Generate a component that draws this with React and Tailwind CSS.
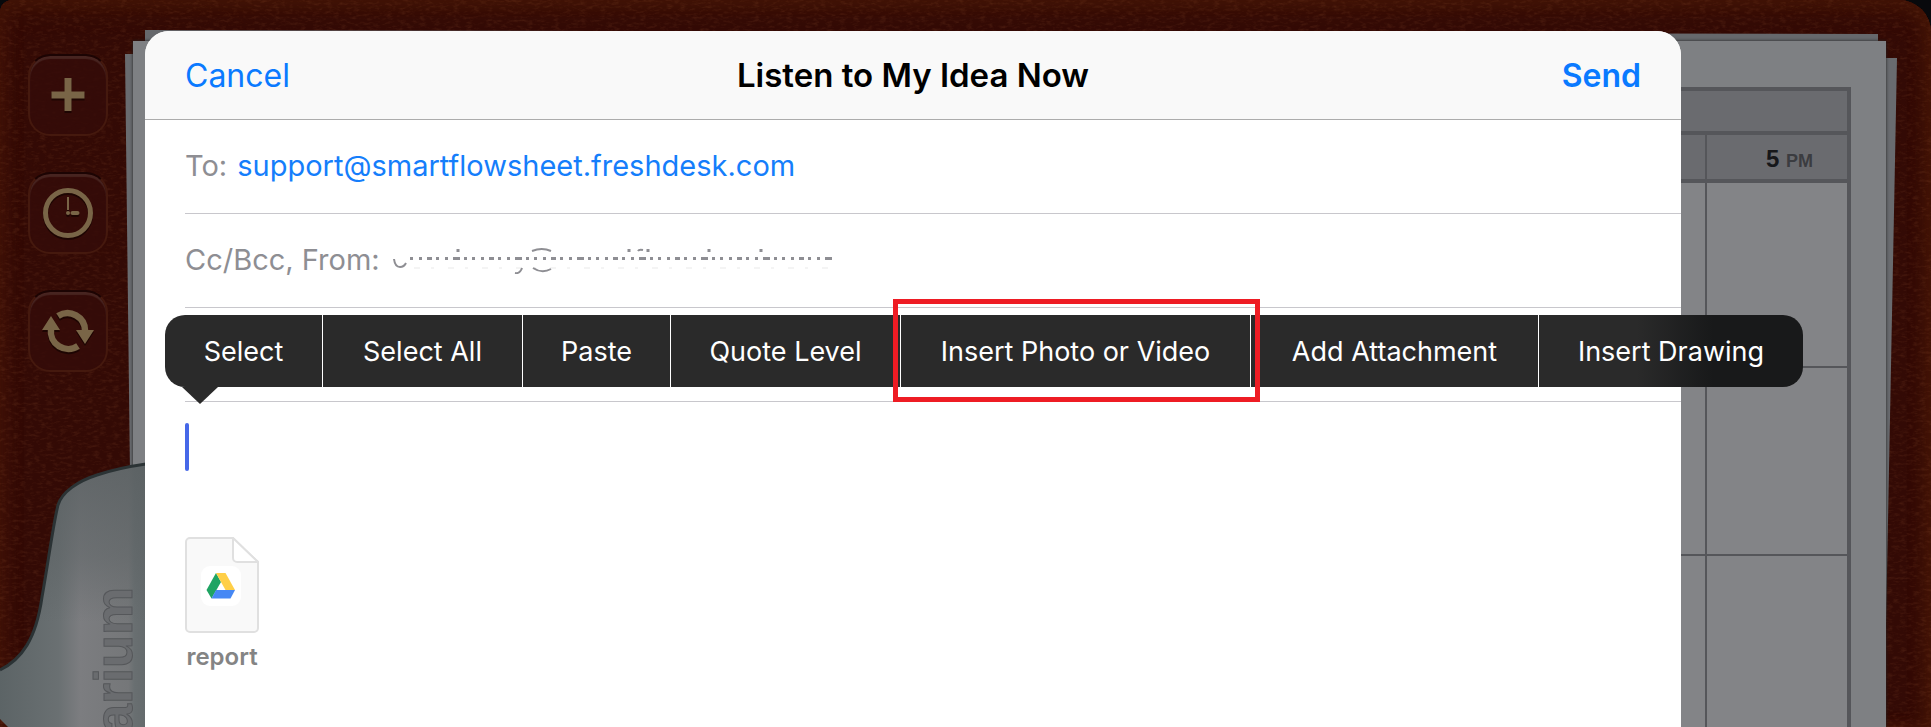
import React from 'react';

const MENU_ITEMS = ['Select', 'Select All', 'Paste', 'Quote Level', 'Insert Photo or Video', 'Add Attachment', 'Insert Drawing'];

const PlusIcon = () => (
    <svg width="50" height="50" viewBox="0 0 50 50" fill="#796547" className="drop-shadow-[0_2px_0_#1d0502]">
        <path d="M21.5 8h7v13.500h13v7h-13V41h-7V28.500h-13v-7h13z" />
    </svg>
);

const ClockIcon = () => (
    <svg width="50" height="50" viewBox="0 0 50 50" fill="none" stroke="#796547" className="drop-shadow-[0_2px_0_#1d0502]">
        <circle cx="25" cy="25" r="22.5" strokeWidth="5" />
        <path d="M25 9v13" strokeWidth="2" />
        <path d="M29.5 25h5" strokeWidth="4" strokeLinecap="round" />
        <circle cx="25" cy="25" r="2" fill="#796547" stroke="none" />
    </svg>
);

const SyncIcon = () => (
    <svg width="52" height="44" viewBox="0 0 52 44" className="drop-shadow-[0_2px_0_#1d0502]">
        <g fill="none" stroke="#796547" strokeWidth="6.5">
            <path d="M16 7A17.500 17.500 0 0 1 43 22" />
            <path d="M36 37A17.500 17.500 0 0 1 9 20" />
        </g>
        <path d="M0 21 9 7l9 14zM34 21h18l-9 14z" fill="#796547" />
    </svg>
);

const SIDE_BUTTONS = [
    { label: 'Add', Icon: PlusIcon },
    { label: 'Schedule', Icon: ClockIcon },
    { label: 'Sync', Icon: SyncIcon },
];

const Sidebar = () => (
    <nav className="flex w-[145px] flex-col gap-9 pl-7 pt-[54px]">
        {SIDE_BUTTONS.map(({ label, Icon }) => (
            <button
                key={label}
                aria-label={label}
                className="flex h-[82px] w-20 items-center justify-center rounded-[22px] border-2 border-[#45190e] border-t-[#1c0403] bg-[#340b09]/80 shadow-[inset_0_3px_1px_#472420]"
            >
                <Icon />
            </button>
        ))}
    </nav>
);

const Leather = () => (
    <svg className="absolute inset-0 h-full w-full opacity-15" aria-hidden="true">
        <filter id="leather">
            <feTurbulence type="fractalNoise" baseFrequency="0.15 0.35" numOctaves="3" seed="4" />
            <feColorMatrix values="0 0 0 0 0.42  0 0 0 0 0.14  0 0 0 0 0.05  2.4 0 0 0 -1.1" />
        </filter>
        <rect width="100%" height="100%" filter="url(#leather)" />
    </svg>
);

const CLIP_EDGE = 'M146 5C125 8 112 11 97 16C78 22 62 33 58 46C53 66 48 105 42 138C36 180 22 200 0 211';

const Clip = () => (
    <svg className="absolute bottom-0 left-0" width="146" height="268" viewBox="0 0 146 268" aria-hidden="true">
        <defs>
            <linearGradient id="metal" x1="0" x2="1" y1="0" y2="0">
                <stop offset="0" stopColor="#5c6466" />
                <stop offset="0.4" stopColor="#6a7072" />
                <stop offset="0.55" stopColor="#7c7d80" />
                <stop offset="0.88" stopColor="#757779" />
                <stop offset="0.92" stopColor="#696f71" />
                <stop offset="1" stopColor="#646a6c" />
            </linearGradient>
            <linearGradient id="shade" x1="0" x2="0" y1="0" y2="1">
                <stop offset="0" stopColor="#5a6062" stopOpacity="0.8" />
                <stop offset="0.35" stopColor="#5c6264" stopOpacity="0.5" />
                <stop offset="0.6" stopColor="#5c6264" stopOpacity="0" />
            </linearGradient>
        </defs>
        <path d={`${CLIP_EDGE}V260L8 268H146Z`} fill="url(#metal)" />
        <path d={`${CLIP_EDGE}V260L8 268H146Z`} fill="url(#shade)" />
        <path d={CLIP_EDGE} fill="none" stroke="#2b3335" strokeWidth="3" />
        <text
            transform="translate(132 128) rotate(-90)"
            textAnchor="end"
            fontSize="54"
            fontWeight="700"
            fill="#6a6c6f"
            stroke="#55575a"
            strokeWidth="1"
            className="font-['Liberation_Sans',sans-serif]"
        >
            arium
        </text>
    </svg>
);

const Schedule = () => (
    <table className="w-full table-fixed border-separate border-spacing-0 border-r-4 border-t-4 border-[#55565a] font-['Liberation_Sans',sans-serif]">
        <colgroup>
            <col />
            <col className="w-[142px]" />
        </colgroup>
        <thead className="bg-[#6a6b6f]">
            <tr>
                <th colSpan="2" className="h-11 border-b-4 border-[#55565a] p-0" />
            </tr>
            <tr>
                <th className="h-12 border-b-4 border-[#55565a] p-0" />
                <th className="h-12 border-b-4 border-l-2 border-[#55565a] p-0 pr-[34px] pt-1 text-right text-2xl leading-none text-[#16171a]">
                    5 <span className="text-lg leading-none text-[#3b3c40]">PM</span>
                </th>
            </tr>
        </thead>
        <tbody className="bg-[#838487]">
            <tr>
                <td className="h-[185px] border-b-2 border-[#55565a] p-0" />
                <td className="h-[185px] border-b-2 border-l-2 border-[#55565a] p-0" />
            </tr>
            {[1, 2].map((row) => (
                <tr key={row}>
                    <td className="h-[188px] border-b-2 border-[#55565a] p-0" />
                    <td className="h-[188px] border-b-2 border-l-2 border-[#55565a] p-0" />
                </tr>
            ))}
        </tbody>
    </table>
);

const Notebook = () => (
    <div className="relative flex min-w-0 overflow-hidden rounded-tl-xl rounded-tr-[32px] bg-[#330a05] shadow-[inset_0_10px_20px_#401306,inset_-8px_0_14px_#451507,inset_8px_0_14px_#3e1009] [grid-area:1/1]">
        <Leather />
        <div className="relative flex min-w-0 flex-1">
            <Sidebar />
            {/* loose sheets under the top page */}
            <div className="absolute bottom-0 left-[125px] right-[34px] top-[54px] bg-[#696b6f] [clip-path:polygon(0_0,100%_4px,calc(100%-13px)_100%,8px_100%)]" />
            <div className="absolute bottom-0 left-[145px] right-[53px] top-[30px] bg-[#66686c] [clip-path:polygon(0_0,100%_4px,100%_100%,0_100%)]" />
            <div className="absolute bottom-0 left-[133px] right-[45px] top-[41px] overflow-hidden bg-[#7e8083] pl-10 pr-[35px] pt-[46px] shadow-[0_0_3px_#222]">
                <Schedule />
            </div>
        </div>
        <Clip />
    </div>
);

const DriveFile = () => (
    <svg width="74" height="96" viewBox="0 0 74 96" aria-hidden="true">
        <path d="M5 1H48L73 25V91a4 4 0 0 1-4 4H5a4 4 0 0 1-4-4V5a4 4 0 0 1 4-4Z" fill="#f9f9f9" stroke="#e0e0e0" strokeWidth="2" />
        <path d="M48 1V21a4 4 0 0 0 4 4H73Z" fill="#fff" stroke="#e0e0e0" strokeWidth="2" />
        <rect x="16" y="29" width="40" height="40" rx="9" fill="#fff" />
        <path d="M31 36 21.500 53 26.500 61.500 36 45Z" fill="#1fa463" />
        <path d="M31 36H40.500L50 53H40.500Z" fill="#ffcf48" />
        <path d="M31 53H50L45.500 61.500H26.500Z" fill="#4688f4" />
    </svg>
);

// sender address, scrubbed out down to a few stray marks
const ScrubbedSender = () => (
    <svg width="444" height="28" viewBox="0 0 444 28" fill="none" stroke="#8e8e93" strokeWidth="2" role="img" aria-label="Hidden sender">
        <path d="M2 13Q3 21 8 21Q12 21 14 17" />
        <path d="M18 12.500H441" strokeWidth="3" strokeDasharray="3 6 3 5 5 4 3 6 3 5 7 4 3 5" />
        <path d="M66 3v3M237 3v3M256 3v3M317 3v3M369 3v3" strokeWidth="3" />
        <path d="M246 5q1-2 5-1M140 5q10-4 19 0M141 22q9 6 18 1M130 22q-2 6-7 5" />
        <path d="M22 22H441" strokeWidth="1" strokeDasharray="6 11 3 14" opacity="0.2" />
    </svg>
);

const EditMenu = () => (
    <div className="absolute -right-[122px] left-5 top-[284px]">
        <div className="grid h-18 grid-cols-[158fr_200fr_148fr_230fr_350fr_288fr_264fr] rounded-[20px] bg-[linear-gradient(to_right,#2a2a2a_calc(100%-166px),#18191a_calc(100%-90px))]">
            {MENU_ITEMS.map((item) => (
                <button key={item} className="relative whitespace-nowrap border-r border-white pt-0.5 text-[27px] text-white last:border-r-0">
                    {item}
                    {item === 'Insert Photo or Video' && (
                        <span className="absolute -bottom-[15px] -left-2 -right-[10px] -top-4 border-5 border-[#ee1c24]" />
                    )}
                </button>
            ))}
        </div>
        <div className="ml-[17px] h-[17px] w-9 bg-[#2a2a2a] [clip-path:polygon(0_0,100%_0,50%_100%)]" />
    </div>
);

const ComposeSheet = () => (
    <section className="relative ml-[145px] mr-[250px] mt-[31px] flex flex-col rounded-t-3xl bg-white [grid-area:1/1]">
        <header className="grid h-[89px] grid-cols-[1fr_auto_1fr] items-center rounded-t-3xl border-b border-[#acacac] bg-[#f9f9f9] px-10 pt-0.5 text-[32px]">
            <button className="justify-self-start text-[#0a7aff]">Cancel</button>
            <h1 className="text-[33px] font-semibold text-black">Listen to My Idea Now</h1>
            <button className="justify-self-end font-semibold text-[#0a7aff]">Send</button>
        </header>
        <div className="flex flex-col pl-10 text-[29px] text-[#8e8e93]">
            <div className="flex h-[94px] items-center gap-[10px] border-b border-[#c8c7cc] pb-0.5">
                <span>To:</span>
                <a href="mailto:support@smartflowsheet.freshdesk.com" className="text-[#157efb]">
                    support@smartflowsheet.freshdesk.com
                </a>
            </div>
            <div className="flex h-[94px] items-center gap-3 border-b border-[#c8c7cc] pb-0.5">
                <span>Cc/Bcc, From:</span>
                <ScrubbedSender />
            </div>
            <div className="h-[94px] border-b border-[#c8c7cc]" />
            <div className="mt-[21px] h-12 w-1 rounded-sm bg-[#4668e8]" />
            <figure className="mt-[66px] flex w-[74px] flex-col items-center gap-2">
                <DriveFile />
                <figcaption className="text-2xl font-semibold text-[#848484]">report</figcaption>
            </figure>
        </div>
        <EditMenu />
    </section>
);

const App = () => (
    <main className="grid h-screen grid-cols-1 grid-rows-1 overflow-hidden bg-[#08090c] font-[Inter,sans-serif]">
        <Notebook />
        <ComposeSheet />
    </main>
);

export default App;
